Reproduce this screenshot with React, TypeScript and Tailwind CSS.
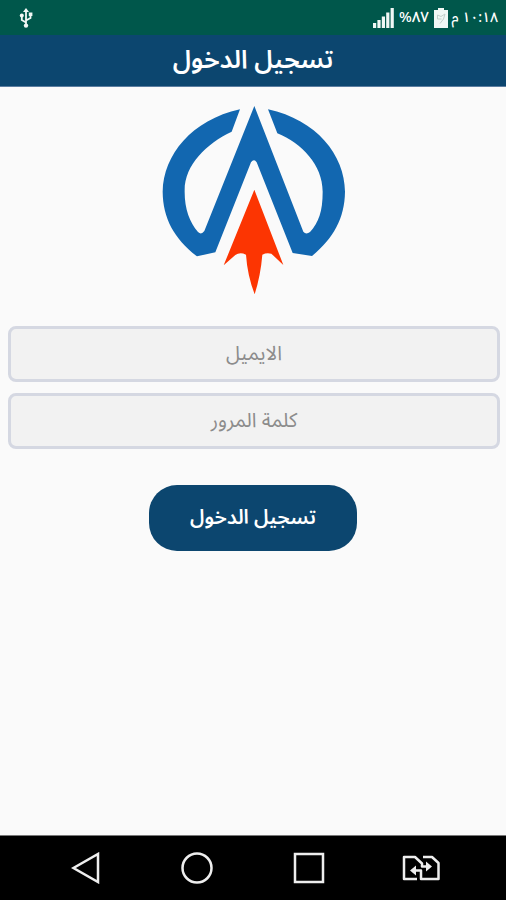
import React, { useState } from "react";

interface FieldProps {
  type: string;
  placeholder: string;
  value: string;
  onChange: (value: string) => void;
}

const StatusBar: React.FC = () => (
  <div dir="ltr" className="flex h-[35px] items-center justify-between bg-[#00574b] pl-[19px] pr-[8px] text-white">
    <svg width="14" height="20" viewBox="0 0 14 20" fill="none" stroke="#f1f7f5" strokeWidth="1.8">
      <path d="M7 2v15M7 14.500 2.800 12V7.500M7 12.500l4.500-2.500V6" />
      <path d="M7 0l3 4H4z" fill="#f1f7f5" stroke="none" />
      <circle cx="7" cy="17.600" r="2.200" fill="#f1f7f5" stroke="none" />
      <circle cx="2.800" cy="7.500" r="2" fill="#f1f7f5" stroke="none" />
      <path d="M9.800 4.500h3.600v3.500H9.800z" fill="#f1f7f5" stroke="none" />
    </svg>
    <div className="flex items-center">
      <svg width="22" height="20" viewBox="0 0 22 20" fill="#f1f7f5">
        <path d="M1 15h3.200v5H1zM5.400 12h3.200v8H5.400zM9.800 8.500h3.200V20H9.800zM14.200 4.500h3.200V20h-3.200zM18.600 0h3.200v20h-3.200z" />
      </svg>
      <span className="ml-[5px] w-[30px] whitespace-nowrap text-[15px] font-medium leading-none">%٨٧</span>
      <svg className="ml-[5px]" width="14" height="20" viewBox="0 0 14 20">
        <path d="M4 0h6v2h4v18H0V2h4z" fill="#f1f7f5" />
        <path d="M3.500 7l3.500 1.500L11 6 9.500 11 6 15.500M3.500 7v4h4" fill="none" stroke="#c3cfcb" strokeWidth="1" />
      </svg>
      <span dir="rtl" className="ml-[3px] w-[47px] whitespace-nowrap text-[14px] font-medium leading-none">١٠:١٨ م</span>
    </div>
  </div>
);

const Logo: React.FC = () => (
  <svg className="mx-auto" width="210" height="205" viewBox="0 0 630 615">
    <g fill="#1267b0">
      <path d="M313 33 460 410Q468 420 480 411C506 382 518 350 518 290C518 210 455 145 382 115L354 43C500 75 584 180 585 290C584 370 550 430 486 483L428 474 320 202Q312 190 303 202L196 472 141 484C72 430 39 370 38 290C40 180 125 75 270 43L245 110C170 145 104 210 104 285C103 340 118 380 144 411Q154 421 163 408Z" />
    </g>
    <path d="M313 284 400 510 364 476Q350 472 337 479Q332 540 314 598Q292 540 288 479Q270 470 256 480L221 511Z" fill="#fc3502" />
  </svg>
);

const Field: React.FC<FieldProps> = ({ type, placeholder, value, onChange }) => (
  <input
    type={type}
    placeholder={placeholder}
    value={value}
    onChange={(e) => onChange(e.target.value)}
    className="h-[56px] w-full rounded-[8px] border-[3px] border-[#d5d8e2] bg-[#f2f2f2] text-center text-[20px] text-[#333333] outline-none placeholder:text-[#8c8c8c]"
  />
);

const NavBar: React.FC = () => (
  <div dir="ltr" className="flex h-[65px] items-center border-t border-[#777777] bg-black pl-[71px] text-[#eeeeee]">
    <svg width="30" height="32" viewBox="0 0 30 32" fill="none" stroke="currentColor" strokeWidth="2.500">
      <path d="M27 2v28L2.500 16z" />
    </svg>
    <svg className="ml-[80px]" width="32" height="32" viewBox="0 0 32 32" fill="none" stroke="currentColor" strokeWidth="2.500">
      <circle cx="16" cy="16" r="14.500" />
    </svg>
    <svg className="ml-[80px]" width="32" height="32" viewBox="0 0 32 32" fill="none" stroke="currentColor" strokeWidth="2.500">
      <path d="M2 2h28v28H2z" />
    </svg>
    <svg className="ml-[77px]" width="38" height="26" viewBox="0 0 38 26" fill="none" stroke="currentColor" strokeWidth="2.500" strokeLinejoin="round">
      <path d="M15 24H2V2h11l7 6.500v3h6M21 2h9l6.500 6v16H19v-8.500h-7" />
      <path d="M24 6.500l6 5-6 5zM14 10.500l-6 5 6 5z" fill="currentColor" stroke="none" />
    </svg>
  </div>
);

const App: React.FC = () => {
  const [email, setEmail] = useState("");
  const [password, setPassword] = useState("");

  return (
    <div
      dir="rtl"
      className="flex h-[900px] w-[506px] flex-col bg-[#fafafa] font-['Noto_Sans_Arabic','Noto_Sans','DejaVu_Sans',sans-serif]"
    >
      <StatusBar />
      <header className="flex h-[52px] items-center justify-center border-b border-[#5b7da0] bg-[#0c466f]">
        <h1 className="text-[25.5px] font-semibold leading-none text-white">تسجيل الدخول</h1>
      </header>
      <main className="flex grow flex-col pl-[8px] pr-[6px] pt-[8px]">
        <div dir="ltr" className="pl-[2px]">
          <Logo />
        </div>
        <form className="mt-[26px] flex flex-col gap-[11px]" onSubmit={(e) => e.preventDefault()}>
          <Field type="email" placeholder="الايميل" value={email} onChange={setEmail} />
          <Field type="password" placeholder="كلمة المرور" value={password} onChange={setPassword} />
          <button
            type="submit"
            className="mr-[143px] mt-[25px] h-[66px] w-[208px] rounded-[28px] bg-[#0c466f] text-[20px] font-semibold text-white"
          >
            تسجيل الدخول
          </button>
        </form>
      </main>
      <NavBar />
    </div>
  );
};

export default App;
